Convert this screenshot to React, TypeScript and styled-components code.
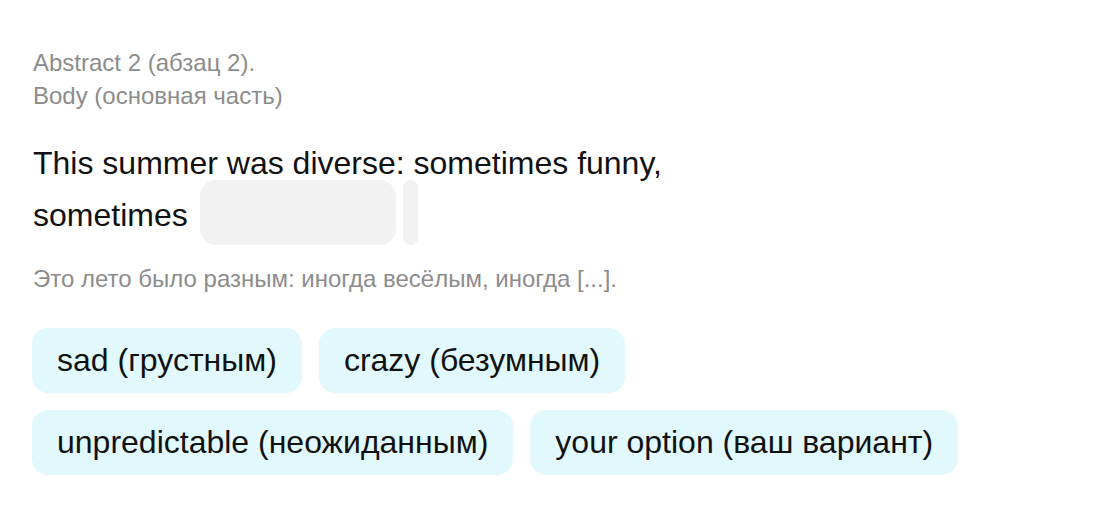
import styled, { createGlobalStyle } from 'styled-components';

const GlobalStyle = createGlobalStyle`
  body {
    margin: 0;
    background: #ffffff;
    font-family: "Liberation Sans", Arial, sans-serif;
  }
`;

const Page = styled.div`
  padding: 46px 32px 0 33px;
  display: flex;
  flex-direction: column;
`;

const Caption = styled.div`
  font-size: 24px;
  line-height: 33px;
  color: #8c8c8c;
`;

const Sentence = styled.div`
  margin-top: 33px;
  font-size: 32px;
  line-height: 36px;
  color: #111111;
`;

const BlankRow = styled.div`
  display: flex;
  align-items: center;
  height: 65px;
  margin-top: -1px;
  font-size: 32px;
  color: #111111;
`;

const Word = styled.span`
  padding-top: 5px;
`;

const Blank = styled.div`
  width: 196px;
  height: 65px;
  margin-left: 12px;
  border-radius: 16px;
  background: #f2f2f2;
`;

const Caret = styled.div`
  width: 15px;
  height: 65px;
  margin-left: 7px;
  border-radius: 8px;
  background: #f2f2f2;
`;

const Translation = styled.div`
  margin-top: 19px;
  font-size: 24px;
  line-height: 30px;
  color: #8c8c8c;
`;

const Options = styled.div`
  margin-top: 34px;
  margin-left: -1px;
  display: flex;
  flex-wrap: wrap;
  gap: 17px;
`;

const Chip = styled.button`
  height: 65px;
  padding: 0 25px;
  border: none;
  border-radius: 16px;
  background: #e1f8fc;
  font-family: inherit;
  font-size: 32px;
  color: #111111;
  cursor: pointer;
`;

const options = [
  'sad (грустным)',
  'crazy (безумным)',
  'unpredictable (неожиданным)',
  'your option (ваш вариант)',
];

export default function App() {
  return (
    <>
      <GlobalStyle />
      <Page>
        <Caption>
          Abstract 2 (абзац 2).
          <br />
          Body (основная часть)
        </Caption>
        <Sentence>This summer was diverse: sometimes funny,</Sentence>
        <BlankRow>
          <Word>sometimes</Word>
          <Blank />
          <Caret />
        </BlankRow>
        <Translation>Это лето было разным: иногда весёлым, иногда [...].</Translation>
        <Options>
          {options.map((o) => (
            <Chip key={o}>{o}</Chip>
          ))}
        </Options>
      </Page>
    </>
  );
}
